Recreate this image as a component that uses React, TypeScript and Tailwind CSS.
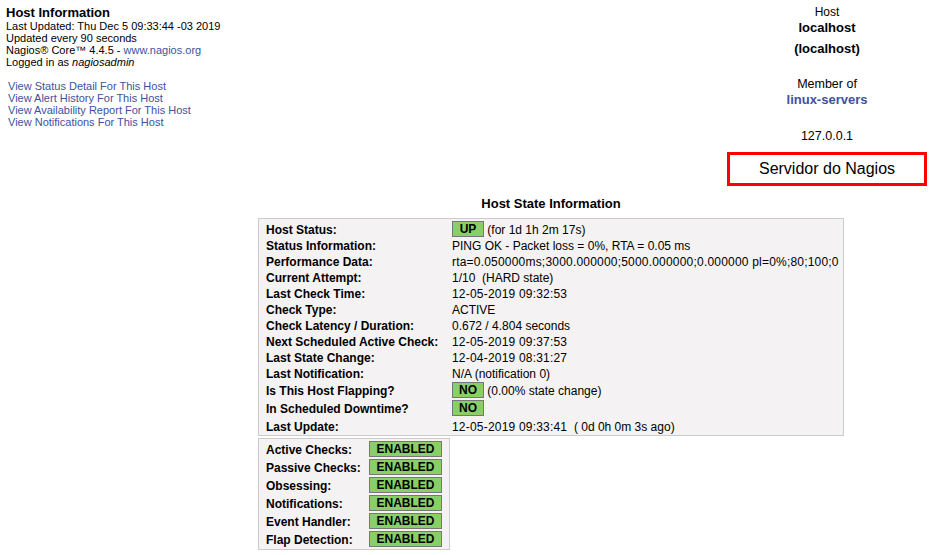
import React from "react";

function Badge({ text, w }: { text: string; w: string }) {
  return (
    <span
      className={`inline-flex items-center justify-center h-4 ${w} border border-[#777777] bg-[#88d066] font-bold text-[12px] leading-none text-black`}
    >
      {text}
    </span>
  );
}

function Row({ label, children, h = "h-4" }: { label: string; children: React.ReactNode; h?: string }) {
  return (
    <div className={`flex items-center ${h}`}>
      <div className="w-[186px] shrink-0 font-bold pt-[2px]">{label}</div>
      <div className="flex items-center whitespace-pre">{children}</div>
    </div>
  );
}

function T({ children, num = false }: { children: React.ReactNode; num?: boolean }) {
  return <span className={`pt-[2px] ${num ? "tracking-[0.2px]" : ""}`}>{children}</span>;
}

function FRow({ label }: { label: string }) {
  return (
    <div className="flex items-center h-[18px]">
      <div className="w-[103px] shrink-0 font-bold pt-[2px]">{label}</div>
      <Badge text="ENABLED" w="w-[73px]" />
    </div>
  );
}

export default function App() {
  return (
    <div className="w-[945px] h-[555px] bg-white text-black overflow-hidden font-['Liberation_Sans',Arial,sans-serif]">
      <div className="flex justify-between h-[187px]">
        <div className="pl-[6px] pt-[5px]">
          <div className="text-[13px] font-bold leading-[15px]">Host Information</div>
          <div className="text-[11px] leading-[12px]">
            <div>Last Updated: Thu Dec 5 09:33:44 -03 2019</div>
            <div>Updated every 90 seconds</div>
            <div>
              Nagios® Core™ 4.4.5 - <span className="text-[#40529b]">www.nagios.org</span>
            </div>
            <div>
              Logged in as <i>nagiosadmin</i>
            </div>
            <div className="mt-[12px] pl-[2px] text-[#40529b]">
              <div>View Status Detail For This Host</div>
              <div>View Alert History For This Host</div>
              <div>View Availability Report For This Host</div>
              <div>View Notifications For This Host</div>
            </div>
          </div>
        </div>
        <div className="w-[200px] mr-[18px] flex flex-col items-center pt-[5px]">
          <div className="text-[12px] leading-[15px]">Host</div>
          <div className="text-[13px] font-bold leading-[15px]">localhost</div>
          <div className="text-[13px] font-bold leading-[15px] mt-[6px]">(localhost)</div>
          <div className="text-[12.5px] leading-[15px] mt-[21px]">Member of</div>
          <div className="text-[13px] font-bold leading-[15px] text-[#40529b]">linux-servers</div>
          <div className="text-[12.5px] leading-[15px] mt-[22px]">127.0.0.1</div>
          <div className="mt-[8px] w-[200px] h-[34px] border-[3px] border-[#ff0000] flex items-center justify-center text-[16px] leading-none">
            Servidor do Nagios
          </div>
        </div>
      </div>

      <div className="ml-[258px]">
        <div className="w-[586px] text-center text-[13px] font-bold leading-[15px] mt-[9px]">
          Host State Information
        </div>
        <div className="mt-[7px] w-[586px] border border-[#cccccc] bg-[#f4f2f2] pl-[7px] pt-[1px] text-[12px] leading-[14px]">
          <Row label="Host Status:" h="h-[17px]">
            <Badge text="UP" w="w-[32px]" />
            <T> (for 1d 1h 2m 17s)</T>
          </Row>
          <Row label="Status Information:">
            <T>PING OK - Packet loss = 0%, RTA = 0.05 ms</T>
          </Row>
          <Row label="Performance Data:">
            <T num>rta=0.050000ms;3000.000000;5000.000000;0.000000 pl=0%;80;100;0</T>
          </Row>
          <Row label="Current Attempt:">
            <T>1/10  (HARD state)</T>
          </Row>
          <Row label="Last Check Time:">
            <T num>12-05-2019 09:32:53</T>
          </Row>
          <Row label="Check Type:">
            <T>ACTIVE</T>
          </Row>
          <Row label="Check Latency / Duration:">
            <T>0.672 / 4.804 seconds</T>
          </Row>
          <Row label="Next Scheduled Active Check:">
            <T num>12-05-2019 09:37:53</T>
          </Row>
          <Row label="Last State Change:">
            <T num>12-04-2019 08:31:27</T>
          </Row>
          <Row label="Last Notification:">
            <T>N/A (notification 0)</T>
          </Row>
          <Row label="Is This Host Flapping?" h="h-[18px]">
            <Badge text="NO" w="w-[32px]" />
            <T> (0.00% state change)</T>
          </Row>
          <Row label="In Scheduled Downtime?" h="h-[18px]">
            <Badge text="NO" w="w-[32px]" />
          </Row>
          <Row label="Last Update:" h="h-[18px]">
            <T num>12-05-2019 09:33:41</T>
            <T>  ( 0d 0h 0m 3s ago)</T>
          </Row>
        </div>
        <div className="mt-[2px] w-[192px] border border-[#cccccc] bg-[#f4f2f2] pl-[7px] pt-[1px] pb-[1px] text-[12px] leading-[14px]">
          <FRow label="Active Checks:" />
          <FRow label="Passive Checks:" />
          <FRow label="Obsessing:" />
          <FRow label="Notifications:" />
          <FRow label="Event Handler:" />
          <FRow label="Flap Detection:" />
        </div>
      </div>
    </div>
  );
}
